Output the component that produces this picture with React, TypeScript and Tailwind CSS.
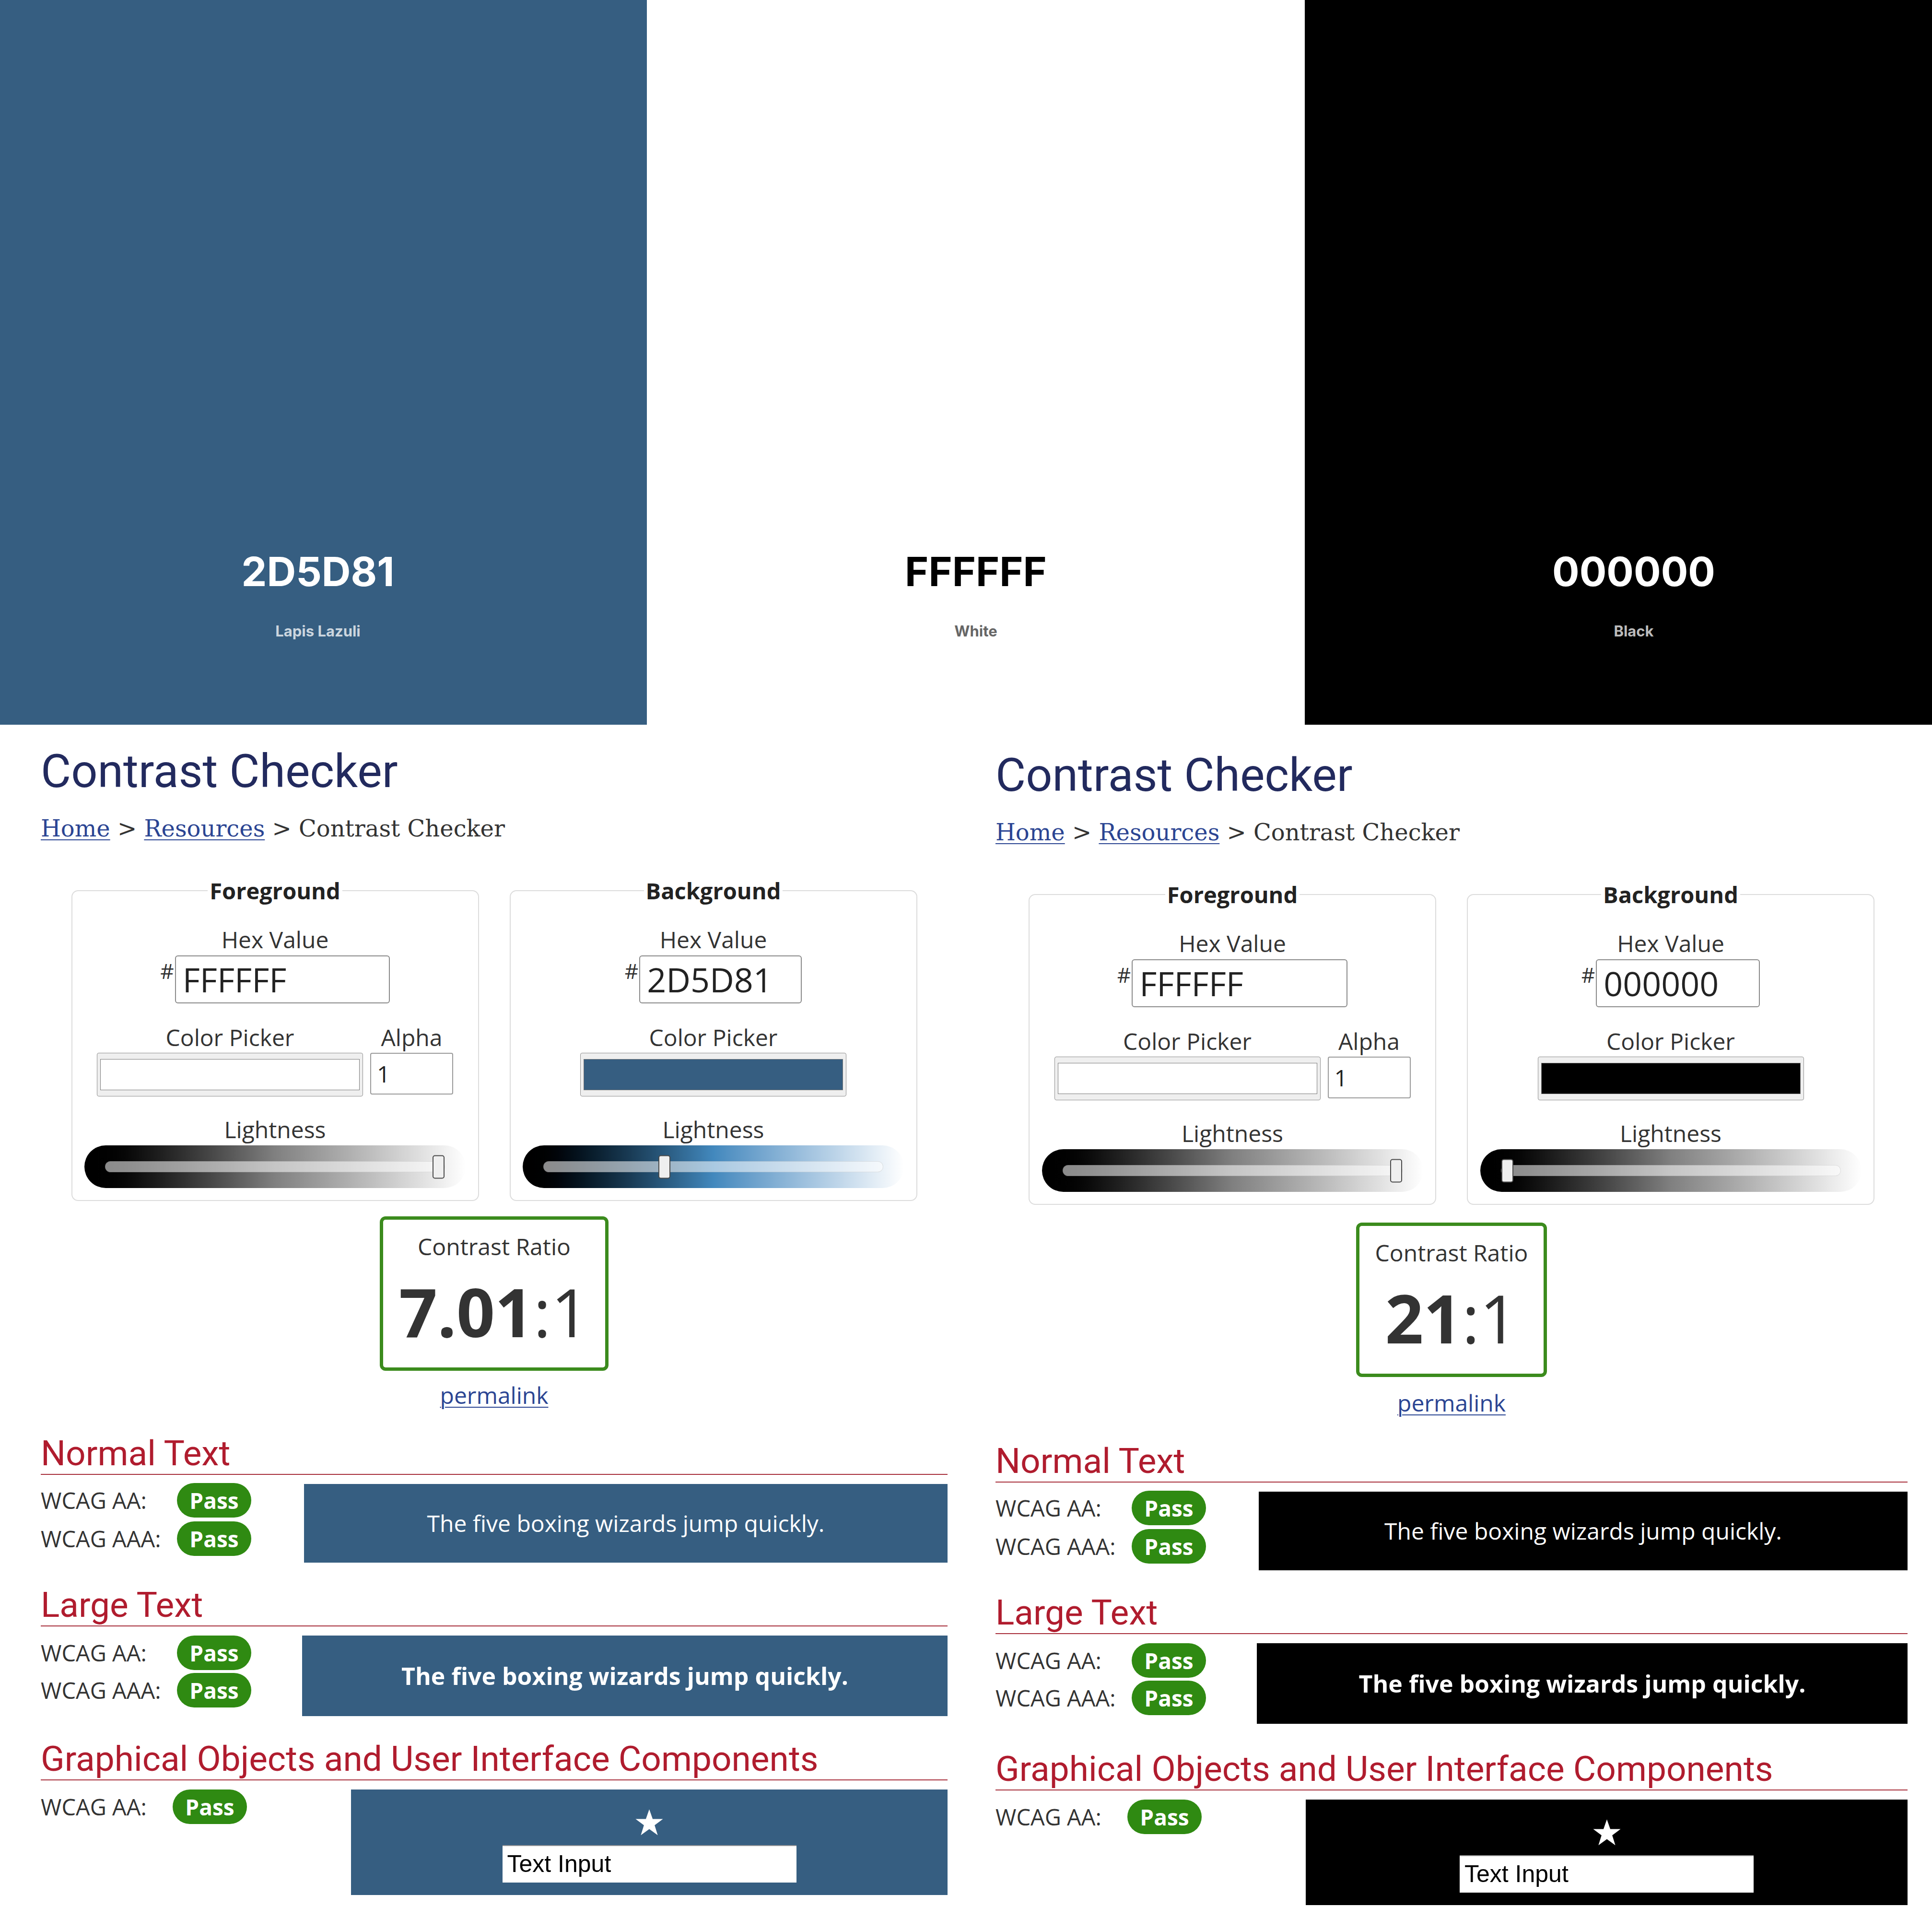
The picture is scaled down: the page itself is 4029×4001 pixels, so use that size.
import React from 'react';

type Side = {
  title: string;
  hex: string;
  hexW: string;
  fill: string;
  grad: string;
  pos: number;
  alpha?: boolean;
};

type Cfg = {
  fg: Side;
  bg: Side;
  ratioBold: string;
  sample: string;
};

const blueFill = 'bg-[#365e81]';

const leftCfg: Cfg = {
  fg: { title: 'Foreground', hex: 'FFFFFF', hexW: 'w-[448px]', fill: 'bg-white', grad: 'bg-linear-to-r from-black via-[#808080] to-white', pos: 1, alpha: true },
  bg: { title: 'Background', hex: '2D5D81', hexW: 'w-[339px]', fill: blueFill, grad: 'bg-linear-to-r from-black via-[#4288bd] to-white', pos: 0.35 },
  ratioBold: '7.01',
  sample: blueFill,
};

const rightCfg: Cfg = {
  fg: { title: 'Foreground', hex: 'FFFFFF', hexW: 'w-[450px]', fill: 'bg-white', grad: 'bg-linear-to-r from-black via-[#808080] to-white', pos: 1, alpha: true },
  bg: { title: 'Background', hex: '000000', hexW: 'w-[342px]', fill: 'bg-black', grad: 'bg-linear-to-r from-black via-[#808080] to-white', pos: 0 },
  ratioBold: '21',
  sample: 'bg-black',
};

function Swatch({ bg, hex, name, hexColor, nameColor }: { bg: string; hex: string; name: string; hexColor: string; nameColor: string }) {
  return (
    <div className={`w-[1372px] shrink-0 h-full flex flex-col items-center justify-end pb-[175px] font-['Inter',sans-serif] ${bg}`}>
      <div className={`text-[84px] leading-[100px] font-bold ${hexColor}`}>{hex}</div>
      <div className={`mt-[54px] text-[31px] leading-[40px] font-bold ${nameColor}`}>{name}</div>
    </div>
  );
}

function Label({ children, className = '' }: { children: React.ReactNode; className?: string }) {
  return <div className={`text-[48px] leading-[56px] text-[#333] ${className}`}>{children}</div>;
}

function Lightness({ grad, pos }: { grad: string; pos: number }) {
  return (
    <div className={`mt-[5px] w-[795px] h-[89px] rounded-full flex items-center px-[43px] ${grad}`}>
      <div className="relative w-full h-[23px] rounded-full bg-white/55 border border-black/10">
        <div
          className="absolute top-1/2 -translate-y-1/2 w-[25px] h-[49px] rounded-[5px] bg-[#efefef] border-2 border-[#4a4a4a]"
          style={{ left: `calc(${pos} * (100% - 25px))` }}
        />
      </div>
    </div>
  );
}

function ColorBox({ side }: { side: Side }) {
  return (
    <fieldset className="w-[850px] border-2 border-[#dcdcdc] rounded-[14px] px-[20px] pt-[46px] pb-[25px]">
      <legend className="mx-auto px-[4px] text-[47px] leading-[56px] font-bold text-[#222]">{side.title}</legend>
      <div className="flex flex-col items-center">
        <Label>Hex Value</Label>
        <div className="mt-[5px] flex items-start">
          <span className="mt-[10px] mr-[2px] text-[44px] leading-[44px] text-[#333]">#</span>
          <div className={`h-[100px] ${side.hexW} border-2 border-[#8a8a8a] rounded-[6px] pl-[14px] text-[70px] leading-[96px] text-[#222]`}>
            {side.hex}
          </div>
        </div>
        <div className="mt-[43px] flex gap-[15px]">
          <div className="flex flex-col items-center">
            <Label>Color Picker</Label>
            <div className="mt-[4px] w-[555px] h-[91px] rounded-[4px] border border-[#8f8f8f] bg-[#efefef] px-[6px] py-[12px]">
              <div className={`h-full border border-[#7a7a7a] ${side.fill}`} />
            </div>
          </div>
          {side.alpha && (
            <div className="flex flex-col items-center">
              <Label>Alpha</Label>
              <div className="mt-[4px] w-[173px] h-[87px] rounded-[4px] border-2 border-[#9a9a9a] pl-[12px] text-[48px] leading-[83px] text-[#222]">
                1
              </div>
            </div>
          )}
        </div>
        <Label className="mt-[41px]">Lightness</Label>
        <Lightness grad={side.grad} pos={side.pos} />
      </div>
    </fieldset>
  );
}

function Heading({ children, className = '' }: { children: React.ReactNode; className?: string }) {
  return (
    <h2 className={`font-['Roboto',sans-serif] text-[73px] leading-[84px] pb-[1px] border-b-2 border-[#a8303c] text-[#b01c2e] ${className}`}>
      {children}
    </h2>
  );
}

function Grade({ label, labelW }: { label: string; labelW: string }) {
  return (
    <div className="flex items-center">
      <span className={`${labelW} text-[47px] leading-[56px] text-[#333]`}>{label}</span>
      <span className="w-[155px] h-[72px] rounded-full bg-[#2f8a12] text-white font-bold text-[46px] leading-[72px] text-center">
        Pass
      </span>
    </div>
  );
}

function Checker({ cfg, right }: { cfg: Cfg; right?: boolean }) {
  return (
    <div className={right ? 'ml-[100px] w-[1902px] pt-[8px] flex flex-col' : 'w-[1891px] flex flex-col'}>
      <h1 className="mt-[37px] font-['Roboto',sans-serif] text-[97px] leading-[120px] text-[#222a5e]">Contrast Checker</h1>
      <div className="mt-[29px] font-['DejaVu_Serif',serif] text-[48px] leading-[60px] text-[#333]">
        <span className="text-[#2b4593] underline decoration-2 underline-offset-[6px]">Home</span>
        {' > '}
        <span className="text-[#2b4593] underline decoration-2 underline-offset-[6px]">Resources</span>
        {' > Contrast Checker'}
      </div>

      <div className="mt-[72px] flex justify-center gap-[64px]">
        <ColorBox side={cfg.fg} />
        <ColorBox side={cfg.bg} />
      </div>

      <div className={`${right ? 'mt-[37px]' : 'mt-[32px]'} self-center border-[7px] border-[#3b8b1d] rounded-[12px] px-[33px] pt-[28px] pb-[47px] text-center`}>
        <div className="text-[48px] leading-[56px] text-[#333]">Contrast Ratio</div>
        <div className="mt-[37px] text-[140px] leading-[140px] text-[#333]">
          <span className="font-bold">{cfg.ratioBold}</span>:1
        </div>
      </div>
      <div className={`${right ? 'mt-[26px]' : 'mt-[23px]'} self-center text-[48px] leading-[56px] text-[#2b4593] underline decoration-2 underline-offset-[6px]`}>
        permalink
      </div>

      <Heading className="mt-[51px]">Normal Text</Heading>
      <div className="mt-[19px] flex items-start">
        <div className="flex flex-col gap-[8px] -mt-[2px]">
          <Grade label="WCAG AA:" labelW="w-[284px]" />
          <Grade label="WCAG AAA:" labelW="w-[284px]" />
        </div>
        <div className={`ml-[110px] flex-1 py-[54px] text-center text-white text-[48px] leading-[56px] ${cfg.sample}`}>
          The five boxing wizards jump quickly.
        </div>
      </div>

      <Heading className="mt-[46px]">Large Text</Heading>
      <div className="mt-[19px] flex items-start">
        <div className="flex flex-col gap-[6px]">
          <Grade label="WCAG AA:" labelW="w-[284px]" />
          <Grade label="WCAG AAA:" labelW="w-[284px]" />
        </div>
        <div className={`ml-[106px] flex-1 py-[54px] text-center text-white font-bold text-[50px] leading-[60px] ${cfg.sample}`}>
          The five boxing wizards jump quickly.
        </div>
      </div>

      <Heading className={right ? 'mt-[52px]' : 'mt-[47px]'}>Graphical Objects and User Interface Components</Heading>
      <div className="mt-[19px] flex items-start">
        <Grade label="WCAG AA:" labelW="w-[275px]" />
        <div className={`ml-[217px] flex-1 pt-[40px] pb-[26px] flex flex-col items-center ${cfg.sample}`}>
          <svg width="60" height="60" viewBox="0 0 100 100">
            <polygon fill="#fff" points="50,2 61.8,36 97.6,36 68.6,57.6 79.4,92 50,71 20.6,92 31.4,57.6 2.4,36 38.2,36" />
          </svg>
          <div className="mt-[16px] w-[613px] h-[78px] bg-white border-t-2 border-[#9a9a9a] pl-[10px] font-['Liberation_Sans',Arial,sans-serif] text-[50px] leading-[74px] text-black">
            Text Input
          </div>
        </div>
      </div>
    </div>
  );
}

export default function App() {
  return (
    <div className="w-[4029px] h-[4001px] overflow-hidden bg-white font-['Open_Sans',sans-serif] text-[#333]">
      <div className="flex h-[1511px] -ml-[23px]">
        <Swatch bg={blueFill} hex="2D5D81" name="Lapis Lazuli" hexColor="text-white" nameColor="text-white/75" />
        <Swatch bg="bg-white" hex="FFFFFF" name="White" hexColor="text-black" nameColor="text-[#666]" />
        <Swatch bg="bg-black" hex="000000" name="Black" hexColor="text-white" nameColor="text-[#bbb]" />
      </div>
      <div className="flex pl-[85px]">
        <Checker cfg={leftCfg} />
        <Checker cfg={rightCfg} right />
      </div>
    </div>
  );
}
